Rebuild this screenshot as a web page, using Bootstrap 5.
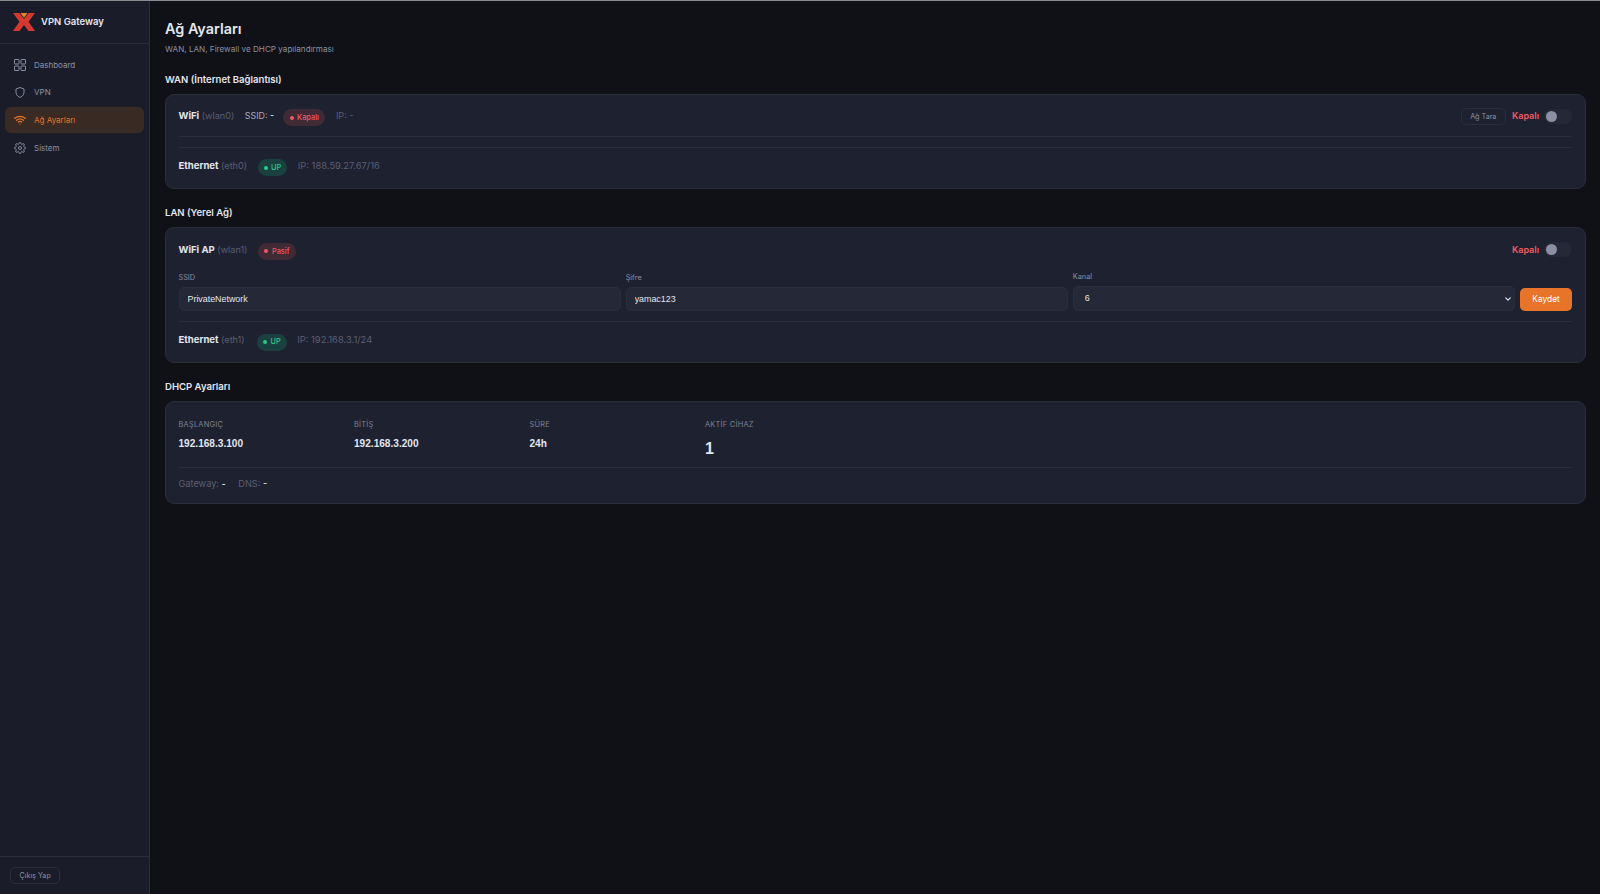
<!DOCTYPE html>
<html lang="en">
<head>
    <meta charset="UTF-8">
    <meta name="viewport" content="width=device-width, initial-scale=1.0">
    <title>VPN Gateway</title>
    <link href="https://cdn.jsdelivr.net/npm/bootstrap@5.3.0/dist/css/bootstrap.min.css" rel="stylesheet">
    <style>
        html, body { height: 100%; }
        body { background: #0f1117; color: #e4e6ee; font-family: Inter, "Noto Sans", sans-serif; font-size: 9.2px; border-top: 1px solid #8a8c90; overflow: hidden; }
        .app-shell { height: 893px; }
        .side { width: 150px; background: #1a1d29; border-right: 1px solid #2a2d3a; flex: none; }
        .brand { height: 43px; padding: 1px 0 0 13px; gap: 6px; border-bottom: 1px solid #2a2d3a; font-size: 9.5px; font-weight: 600; color: #e4e6ee; }
        .brand svg { margin-top: -2px; }
        .side-menu { padding: 7.5px 5px 0; }
        .side-link { height: 26px; margin-bottom: 1.7px; padding-left: 9px; gap: 8px; border-radius: 6px; color: #8b8fa3; font-size: 8px; text-decoration: none; }
        .side-link.active { background: #3a2a24; color: #e8742a; }
        .side-foot { border-top: 1px solid #2a2d3a; padding: 10px 10px; }
        .ghost-btn { display: block; height: 17px; background: transparent; border: 1px solid #2a2d3a; border-radius: 5px; color: #8b8fa3; font-size: 7.2px; padding: 0 8.5px; line-height: 15px; }
        .main-pane { padding: 17.5px 14.5px 0 15px; min-width: 0; }
        .page-title { font-size: 14.4px; font-weight: 600; line-height: 20px; margin: 0 0 4px; color: #e4e6ee; }
        .page-sub { font-size: 8.15px; line-height: 12px; color: #8b8fa3; margin: 0 0 18px; }
        .sec-title { font-size: 9.55px; font-weight: 600; line-height: 14px; margin: 0 0 7px; color: #e4e6ee; }
        .panel { background: #1e2130; border: 1px solid #2a2d3a; border-radius: 9px; padding: 0 12.5px; margin-bottom: 17px; }
        .if-row { gap: 10.5px; font-size: 9.1px; color: #a6a9ba; }
        .if-name { font-weight: 700; font-size: 9.55px; color: #e4e6ee; }
        .if-dev { color: #5b5f73; font-weight: 400; }
        .eth-label { min-width: 68px; }
        .ssid-txt { font-size: 8.9px; margin-right: -1.5px; }
        .dim { color: #5b5f73; }
        .ip-txt { font-size: 9.4px; }
        .pill { display: inline-flex; align-items: center; gap: 3.5px; height: 17px; padding: 0 6.5px; border-radius: 9px; font-size: 7.4px; font-weight: 500; margin-top: 3px; }
        .pill i { width: 4px; height: 4px; border-radius: 50%; background: currentColor; }
        .pill-red { background: #3f2a35; color: #ef5a64; }
        .pill-green { background: #1b4040; color: #2dc98e; padding: 0 6px; }
        .kapali { color: #ef5a64; font-weight: 600; font-size: 9px; margin-left: 6px; margin-right: 5px; }
        .tgl { width: 28px; height: 15px; border-radius: 8px; background: #252836; position: relative; }
        .tgl::after { content: ""; position: absolute; left: 2px; top: 2px; width: 11px; height: 11px; border-radius: 50%; background: #8b8fa3; }
        .rule { border-top: 1px solid #2a2d3a; }
        .wan-top { height: 41px; padding-top: 2px; }
        .wan-gap { height: 11px; }
        .eth-row { height: 41px; padding-bottom: 3px; }
        .lan-top { height: 43.5px; padding-top: 1px; }
        .fld-row { gap: 5px; padding-bottom: 10px; }
        .fld-col { flex: 1 1 0; min-width: 0; }
        .fld-label { font-size: 7.3px; line-height: 11px; color: #8b8fa3; margin-bottom: 4px; }
        .fld { display: block; height: 24px; background: #252836; border: 1px solid #2a2d3a; border-radius: 5px; color: #e4e6ee; font-family: "Liberation Sans", sans-serif; font-size: 8.9px; padding: 0 8px; width: 100%; outline: 0; }
        select.fld { height: 25px; padding: 0 8px 0 11px; appearance: none; background: #252836 url("data:image/svg+xml,%3csvg xmlns='http://www.w3.org/2000/svg' viewBox='0 0 16 16'%3e%3cpath fill='none' stroke='%23e4e6ee' stroke-linecap='round' stroke-linejoin='round' stroke-width='3' d='M2 5l6 6 6-6'/%3e%3c/svg%3e") no-repeat right 3.5px center / 6px 6px; }
        .save-btn { height: 23.5px; width: 52px; background: #e8742a; border: 0; border-radius: 5px; color: #fff; font-size: 8.4px; padding: 0; flex: none; }
        .dhcp-top { height: 65px; padding-top: 17px; }
        .dhcp-foot { height: 36px; padding-bottom: 3.5px; gap: 12.5px; }
        .cap { font-size: 7.4px; line-height: 11px; color: #7d8195; letter-spacing: .25px; margin-bottom: 6.5px; }
        .val { font-size: 10.1px; font-weight: 600; line-height: 14px; color: #e4e6ee; font-family: "Liberation Sans", sans-serif; }
        .val-big { font-size: 16px; line-height: 20px; padding-top: 2px; }
        .stat { width: 175.5px; }
    </style>
</head>
<body>
<div class="app-shell d-flex">
    <aside class="side d-flex flex-column">
        <div class="brand d-flex align-items-center">
            <svg width="22" height="18" viewBox="0 0 22 18"><path d="M0 0h6.5L11 6l4.5-6H22l-6.5 8.8L22 18h-6.5L11 12l-4.5 6H0l6.5-9.2z" fill="#d4392f"/><path d="M7.5 0h7L11 4.8z" fill="#e8862a"/></svg>
            <span>VPN Gateway</span>
        </div>
        <nav class="side-menu d-flex flex-column flex-grow-1">
            <a class="side-link d-flex align-items-center" href="#"><svg width="12" height="12" viewBox="0 0 12 12" fill="none" stroke="currentColor"><rect x=".5" y=".5" width="4.5" height="4.5" rx=".5"/><rect x="7" y=".5" width="4.5" height="4.5" rx=".5"/><rect x=".5" y="7" width="4.5" height="4.5" rx=".5"/><rect x="7" y="7" width="4.5" height="4.5" rx=".5"/></svg>Dashboard</a>
            <a class="side-link d-flex align-items-center" href="#"><svg width="12" height="13" viewBox="0 0 24 24" fill="none" stroke="currentColor" stroke-width="2"><path d="M12 22s8-3 8-10V5l-8-3-8 3v7c0 7 8 10 8 10z"/></svg>VPN</a>
            <a class="side-link active d-flex align-items-center" href="#"><svg width="12" height="12" viewBox="0 0 24 24" fill="none" stroke="currentColor" stroke-width="2.4" stroke-linecap="round"><path d="M1.5 8.5a16 16 0 0 1 21 0M5 12.5a11 11 0 0 1 14 0M8.5 16a6 6 0 0 1 7 0"/><path d="M12 20h.01"/></svg>Ağ Ayarları</a>
            <a class="side-link d-flex align-items-center" href="#"><svg width="12" height="12" viewBox="0 0 24 24" fill="none" stroke="currentColor" stroke-width="2"><circle cx="12" cy="12" r="3"/><path d="M19.4 15a1.7 1.7 0 0 0 .3 1.8l.1.1a2 2 0 1 1-2.8 2.8l-.1-.1a1.7 1.7 0 0 0-2.9 1.2V21a2 2 0 1 1-4 0v-.1a1.7 1.7 0 0 0-2.9-1.2l-.1.1a2 2 0 1 1-2.8-2.8l.1-.1a1.7 1.7 0 0 0-1.2-2.9H3a2 2 0 1 1 0-4h.1a1.7 1.7 0 0 0 1.2-2.9l-.1-.1a2 2 0 1 1 2.8-2.8l.1.1a1.7 1.7 0 0 0 2.9-1.2V3a2 2 0 1 1 4 0v.1a1.7 1.7 0 0 0 2.9 1.2l.1-.1a2 2 0 1 1 2.8 2.8l-.1.1a1.7 1.7 0 0 0 1.2 2.9h.1a2 2 0 1 1 0 4h-.1a1.7 1.7 0 0 0-1.5 1z"/></svg>Sistem</a>
        </nav>
        <div class="side-foot"><button class="ghost-btn" type="button">Çıkış Yap</button></div>
    </aside>
    <main class="main-pane flex-grow-1">
        <h1 class="page-title">Ağ Ayarları</h1>
        <p class="page-sub">WAN, LAN, Firewall ve DHCP yapılandırması</p>

        <h2 class="sec-title">WAN (İnternet Bağlantısı)</h2>
        <section class="panel">
            <div class="d-flex align-items-center justify-content-between wan-top">
                <div class="if-row d-flex align-items-center">
                    <span><span class="if-name">WiFi</span> <span class="if-dev">(wlan0)</span></span>
                    <span class="ssid-txt">SSID: <span class="text-light">-</span></span>
                    <span class="pill pill-red"><i></i>Kapalı</span>
                    <span class="dim">IP: -</span>
                </div>
                <div class="d-flex align-items-center">
                    <button class="ghost-btn" type="button">Ağ Tara</button>
                    <span class="kapali">Kapalı</span>
                    <span class="tgl"></span>
                </div>
            </div>
            <div class="rule wan-gap"></div>
            <div class="rule d-flex align-items-center if-row eth-row">
                <span class="eth-label"><span class="if-name">Ethernet</span> <span class="if-dev">(eth0)</span></span>
                <span class="pill pill-green"><i></i>UP</span>
                <span class="dim ip-txt">IP: 188.59.27.67/16</span>
            </div>
        </section>

        <h2 class="sec-title">LAN (Yerel Ağ)</h2>
        <section class="panel">
            <div class="d-flex align-items-center justify-content-between lan-top">
                <div class="if-row d-flex align-items-center">
                    <span><span class="if-name">WiFi AP</span> <span class="if-dev">(wlan1)</span></span>
                    <span class="pill pill-red"><i></i>Pasif</span>
                </div>
                <div class="d-flex align-items-center">
                    <span class="kapali">Kapalı</span>
                    <span class="tgl"></span>
                </div>
            </div>
            <div class="fld-row d-flex align-items-end">
                <div class="fld-col">
                    <div class="fld-label">SSID</div>
                    <input class="fld" type="text" value="PrivateNetwork">
                </div>
                <div class="fld-col">
                    <div class="fld-label">Şifre</div>
                    <input class="fld" type="text" value="yamac123">
                </div>
                <div class="fld-col">
                    <div class="fld-label">Kanal</div>
                    <select class="fld"><option>6</option></select>
                </div>
                <button class="save-btn" type="button">Kaydet</button>
            </div>
            <div class="rule d-flex align-items-center if-row eth-row">
                <span class="eth-label"><span class="if-name">Ethernet</span> <span class="if-dev">(eth1)</span></span>
                <span class="pill pill-green"><i></i>UP</span>
                <span class="dim ip-txt">IP: 192.168.3.1/24</span>
            </div>
        </section>

        <h2 class="sec-title">DHCP Ayarları</h2>
        <section class="panel">
            <div class="d-flex dhcp-top">
                <div class="stat"><div class="cap">BAŞLANGIÇ</div><div class="val">192.168.3.100</div></div>
                <div class="stat"><div class="cap">BİTİŞ</div><div class="val">192.168.3.200</div></div>
                <div class="stat"><div class="cap">SÜRE</div><div class="val">24h</div></div>
                <div class="stat"><div class="cap">AKTİF CİHAZ</div><div class="val val-big">1</div></div>
            </div>
            <div class="rule d-flex align-items-center dim dhcp-foot">
                <span>Gateway: <span class="text-light">-</span></span>
                <span>DNS: <span class="text-light">-</span></span>
            </div>
        </section>
    </main>
</div>
<script src="https://cdn.jsdelivr.net/npm/bootstrap@5.3.0/dist/js/bootstrap.bundle.min.js"></script>
</body>
</html>
